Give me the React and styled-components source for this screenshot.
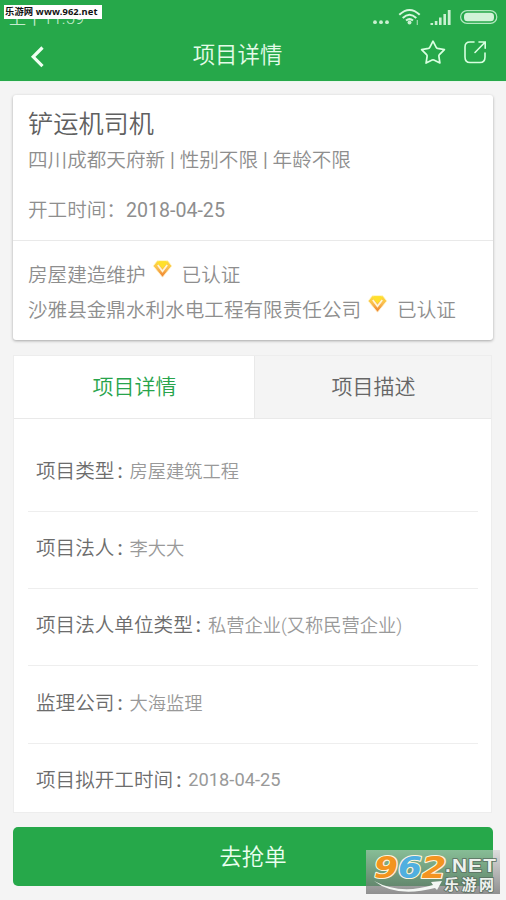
import React from 'react';
import styled, { createGlobalStyle } from 'styled-components';

const GlobalStyle = createGlobalStyle`
  * { box-sizing: border-box; }
  body {
    margin: 0;
    background: #f4f4f4;
    font-family: Roboto, "Noto Sans CJK SC", sans-serif;
    font-weight: 350;
  }
`;

const Screen = styled.main`
  position: relative;
  width: 506px;
  height: 900px;
  overflow: hidden;
  background: #f4f4f4;
`;

const Header = styled.header`
  height: 82px;
  background: #26a84a;
  border-bottom: 1px solid #e9f7ec;
  color: #e4fbe8;
`;

const StatusBar = styled.div`
  height: 30px;
  padding: 0 7px 0 9px;
  display: flex;
  justify-content: space-between;
`;

const Clock = styled.span`
  font-size: 17px;
  line-height: 37px;
  height: 37px;
  color: #c5ecce;
`;

const SiteTag = styled.div`
  position: absolute;
  left: 4px;
  top: 5px;
  width: 98px;
  height: 14px;
  padding-left: 1px;
  background: #fff;
  color: #111;
  font: 700 9.3px/14px "Noto Sans", "Noto Sans CJK SC", sans-serif;
  letter-spacing: 0.13px;
  white-space: nowrap;
`;

const TitleBar = styled.div`
  height: 51px;
  padding: 0 19px 0 29px;
  display: grid;
  grid-template-columns: 74px 1fr 74px;
  align-items: center;
`;

const Title = styled.h1`
  margin: 0;
  padding-right: 41px;
  text-align: center;
  font-size: 22.4px;
  line-height: 48px;
  height: 50px;
  font-weight: 350;
`;

const Actions = styled.div`
  display: flex;
  justify-content: flex-end;
  gap: 17px;
  height: 33px;
`;

const Card = styled.section`
  width: 480px;
  height: 245px;
  margin: 13px 0 0 13px;
  background: #fff;
  border-radius: 3px;
  box-shadow: 0 1px 3px rgba(0, 0, 0, 0.32);
  color: #8e8e8e;
`;

const CardTop = styled.div`
  height: 146px;
  padding: 10px 15px 0;
  border-bottom: 1px solid #e9e9e9;
`;

const CardBottom = styled.div`
  padding: 15px 15px 0;
`;

const JobTitle = styled.h2`
  margin: 0;
  font-size: 25.2px;
  line-height: 39px;
  height: 36px;
  font-weight: 350;
  color: #606060;
`;

const Latin = styled.span`
  font-weight: 400;
`;

const CardLine = styled.p`
  margin: ${p => p.$gap || 0}px 0 0;
  display: flex;
  align-items: center;
  height: 35px;
  font-size: 19.6px;
  white-space: pre;

  ${Latin} { padding-top: 3px; }
`;

const Verified = styled.span`
  margin-left: 6px;
  display: flex;
  gap: 9px;
  align-items: center;

  svg { margin-bottom: 9px; }
`;

const Details = styled.section`
  width: 479px;
  height: 458px;
  margin: 15px 0 0 13px;
  border: 1px solid #ededed;
  background: #fff;
`;

const Tabs = styled.div`
  display: grid;
  grid-template-columns: 240px 1fr;
  height: 63px;
  border-bottom: 1px solid #e9e9e9;
`;

const Tab = styled.button`
  border: 0;
  border-left: ${p => (p.$active ? 0 : 1)}px solid #e9e9e9;
  padding: 0 0 4px 1px;
  background: ${p => (p.$active ? '#fff' : '#f4f4f4')};
  color: ${p => (p.$active ? '#28a44c' : '#666')};
  font: inherit;
  font-size: 21px;
`;

const DetailRows = styled.dl`
  margin: 0 13px 0 14px;
  padding-top: 15.5px;
`;

const Row = styled.div`
  height: 77.3px;
  padding: 0 0 7px 8px;
  display: flex;
  align-items: center;
  border-bottom: 1px solid #eee;

  &:last-child { border-bottom: 0; }
`;

const Label = styled.dt`
  font-size: 19.6px;
  color: #6c6c6c;
  white-space: nowrap;
`;

const Colon = styled.span`
  display: inline-block;
  width: 15.2px;
  padding-left: 3px;
  font-weight: 500;
`;

const Value = styled.dd`
  margin: 0;
  padding-top: 1px;
  font-size: 18.25px;
  color: #999;
  white-space: nowrap;
`;

const GrabButton = styled.button`
  display: block;
  width: 480px;
  height: 59px;
  margin: 14px 0 0 13px;
  padding: 0 0 4px;
  border: 0;
  border-radius: 5px;
  background: #26a84a;
  color: #eafff0;
  font: inherit;
  font-size: 22.4px;
`;

const Watermark = styled.div`
  position: absolute;
  left: 366px;
  top: 850px;
  width: 134px;
  height: 44px;
  background: linear-gradient(rgba(205, 205, 205, 0.58), rgba(110, 110, 110, 0.75));
`;

const details = [
  ['项目类型', '房屋建筑工程'],
  ['项目法人', '李大大'],
  ['项目法人单位类型', '私营企业(又称民营企业)'],
  ['监理公司', '大海监理'],
  ['项目拟开工时间', <Latin key="date">2018-04-25</Latin>],
];

const StatusIcons = () => (
  <svg width="130" height="30" viewBox="369 0 130 30" fill="none">
    <g fill="#c9f0d1">
      <circle cx="375" cy="22.2" r="1.9" />
      <circle cx="381" cy="22.2" r="1.9" />
      <circle cx="387" cy="22.2" r="1.9" />
      <circle cx="409.5" cy="22.6" r="2" />
      <path d="M417.3 20v5" stroke="#9edcac" strokeWidth="1.2" />
      <path d="M430.5 25v-2h2.6v2zM434.8 25v-4h2.6v4zM439 25v-7.5h2.6V25zM443.4 25V14h2.6v11zM447.8 25V10h2.8v15z" />
    </g>
    <path d="M399.3 14.8q10.2-9.6 20.4 0M402.7 18q6.8-6.4 13.6 0M406 20.6q3.5-3 7 0" stroke="#d7f7dd" strokeWidth="2" />
    <rect x="460.6" y="10.6" width="36.2" height="12.8" rx="6.4" stroke="#b4e8c0" strokeWidth="1.2" />
    <rect x="464" y="12.8" width="30" height="8.4" rx="3.5" fill="#d2f3d8" />
  </svg>
);

const BackIcon = () => (
  <svg width="15" height="24" viewBox="0 1 15 24" fill="none" stroke="#f0fff2" strokeWidth="3.2">
    <path d="m13.5 4.5-9.3 9.3 9.3 9.3" />
  </svg>
);

const StarIcon = () => (
  <svg width="26" height="26" viewBox="0 0 26 26" fill="none" stroke="#d8ffe0" strokeWidth="1.7" strokeLinejoin="round">
    <path d="m13 2.2 3.2 6.2q.4.8 1.3 1l6.9 1.2-5 5q-.7.7-.5 1.7l1 6.7-6-3q-.9-.4-1.8 0l-6 3 1-6.7q.2-1-.5-1.7l-5-5 6.9-1.2q.9-.2 1.3-1z" />
  </svg>
);

const ShareIcon = () => (
  <svg width="24" height="26" viewBox="0 0 24 26" fill="none" stroke="#d8ffe0" strokeWidth="1.6" strokeLinecap="round">
    <path d="M11 3H7Q2 3 2 8v10q0 5.5 5 5.5h10q5 0 5-5.5v-4M16 3h6.2v6.2M22 3.2 12 13.5" />
  </svg>
);

const Badge = () => (
  <svg width="21" height="20" viewBox="0 0 21 20" fill="none">
    <path d="M5.2 1.8h10.6l4 5.2L10.5 18.2 1.2 7z" fill="url(#gem)" stroke="#fff6c9" strokeWidth="0.8" />
    <path d="m5.8 6 4.7 6.2L15.2 6" stroke="#fff3d8" strokeWidth="1.8" />
    <path d="M7.2 2.2h6.6l1 2.2-4.3 5.2L6.2 4.4z" fill="#ffe02a" />
    <defs>
      <linearGradient id="gem" x1="10" y1="2" x2="10" y2="18" gradientUnits="userSpaceOnUse">
        <stop stopColor="#ffe034" />
        <stop offset=".45" stopColor="#fabd50" />
        <stop offset="1" stopColor="#ee7c2c" />
      </linearGradient>
    </defs>
  </svg>
);

const WatermarkLogo = () => (
  <svg width="134" height="44" viewBox="0 0 134 44">
    <g fontFamily="DejaVu Sans, sans-serif" fontWeight="700" fontStyle="italic" fontSize="31" stroke="#fff4dc" strokeWidth="2.2" paintOrder="stroke" strokeLinejoin="round">
      <text x="8" y="27.5" textLength="24" lengthAdjust="spacingAndGlyphs" fill="#f39420">9</text>
      <text x="32" y="27.5" textLength="24" lengthAdjust="spacingAndGlyphs" fill="#50afe0">6</text>
      <text x="55.5" y="27.5" textLength="25" lengthAdjust="spacingAndGlyphs" fill="#f39420">2</text>
    </g>
    <path d="M8 31q26 14 59 4l-2-3 11-1-5 9-2-2Q30 48 8 31z" fill="#f4f7f4" />
    <g fill="#eef2ee" stroke="#5b6f61" strokeWidth="1.6" paintOrder="stroke" fontWeight="700">
      <text x="79" y="21.5" textLength="52" lengthAdjust="spacingAndGlyphs" letterSpacing="1" fontFamily="Liberation Sans, sans-serif" fontSize="18">.NET</text>
      <text x="78" y="39.5" textLength="50" fontFamily="Noto Sans CJK SC, sans-serif" fontSize="15">乐游网</text>
    </g>
  </svg>
);

const Certification = () => (
  <Verified><Badge />已认证</Verified>
);

export default function App() {
  return (
    <Screen>
      <GlobalStyle />
      <Header>
        <StatusBar><Clock>上午11:59</Clock><StatusIcons /></StatusBar>
        <TitleBar>
          <BackIcon />
          <Title>项目详情</Title>
          <Actions><StarIcon /><ShareIcon /></Actions>
        </TitleBar>
      </Header>
      <SiteTag>乐游网 www.962.net</SiteTag>
      <Card>
        <CardTop>
          <JobTitle>铲运机司机</JobTitle>
          <CardLine>四川成都天府新<Latin> | </Latin>性别不限<Latin> | </Latin>年龄不限</CardLine>
          <CardLine $gap={15}>开工时间：<Latin>2018-04-25</Latin></CardLine>
        </CardTop>
        <CardBottom>
          <CardLine>房屋建造维护<Certification /></CardLine>
          <CardLine>沙雅县金鼎水利水电工程有限责任公司<Certification /></CardLine>
        </CardBottom>
      </Card>
      <Details>
        <Tabs><Tab $active>项目详情</Tab><Tab>项目描述</Tab></Tabs>
        <DetailRows>
          {details.map(([label, value]) => (
            <Row key={label}><Label>{label}<Colon>:</Colon></Label><Value>{value}</Value></Row>
          ))}
        </DetailRows>
      </Details>
      <GrabButton>去抢单</GrabButton>
      <Watermark><WatermarkLogo /></Watermark>
    </Screen>
  );
}
